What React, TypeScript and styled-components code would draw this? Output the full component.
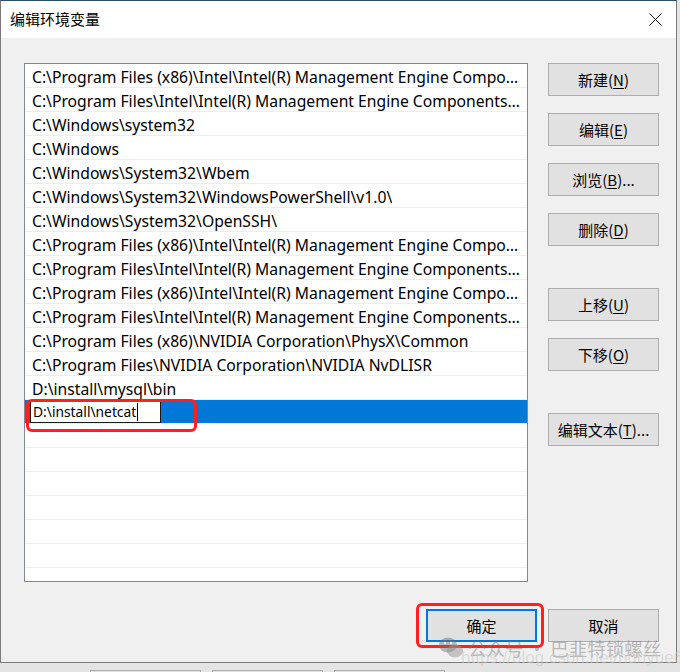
import React from "react";
import styled, { createGlobalStyle } from "styled-components";

const Global = createGlobalStyle`
  html, body { margin: 0; padding: 0; background: #e4e4e4; }
  body { width: 680px; height: 672px; overflow: hidden; }
  * { box-sizing: border-box; }
`;

const FONT = `"Noto Sans", "Noto Sans CJK SC", sans-serif`;
const CJK = `"Noto Sans CJK SC", "Noto Sans", sans-serif`;

const Page = styled.div`
  width: 680px;
  height: 672px;
  display: flex;
  flex-direction: column;
  overflow: hidden;
`;

const Window = styled.div`
  width: 677px;
  height: 663px;
  flex: none;
  background: #f0f0f0;
  border: 1px solid #7a7a7a;
  border-top-color: #2b4f66;
  display: flex;
  flex-direction: column;
  position: relative;
  font-family: ${FONT};
  color: #000;
`;

const TitleBar = styled.div`
  height: 37px;
  background: #fff;
  display: flex;
  align-items: center;
  justify-content: space-between;
  padding: 0 14px 0 9px;
  flex: none;
`;

const Title = styled.div`
  font-family: ${CJK};
  font-size: 15px;
  line-height: 20px;
  margin-top: -2px;
`;

const Body = styled.div`
  flex: 1;
  display: flex;
  flex-direction: column;
  padding: 25px 17px 20px 23px;
`;

const Main = styled.div`
  display: flex;
  gap: 20px;
`;

const ListBox = styled.div`
  position: relative;
  width: 504px;
  height: 519px;
  background: #fff;
  border: 1px solid #828790;
  overflow: hidden;
`;

const Row = styled.div<{ $selected?: boolean }>`
  height: 24px;
  border-bottom: 1px solid #ededed;
  background: ${(p) => (p.$selected ? "#0078d7" : "#fff")};
  display: flex;
  align-items: center;
  padding: 0 3px 0 7px;
  font-size: 15.7px;
  line-height: 22px;
  white-space: nowrap;
  overflow: hidden;
`;

const RowText = styled.span`
  overflow: hidden;
  text-overflow: ellipsis;
  white-space: nowrap;
  padding-top: 3px;
`;

const EditBox = styled.div`
  margin-left: -2px;
  width: 131px;
  height: 23px;
  background: #fff;
  border: 1px solid #1a1a1a;
  display: flex;
  align-items: center;
  padding-left: 2px;
  padding-top: 1px;
  font-size: 13.8px;
  &::after {
    content: "";
    width: 1px;
    height: 18px;
    background: #000;
    margin-left: 1px;
  }
`;

const Mark = styled.div`
  position: absolute;
  border: 3px solid #ff1f1f;
  border-radius: 6px;
  pointer-events: none;
`;

const Side = styled.div`
  display: flex;
  flex-direction: column;
  gap: 17px;
`;

const Spacer = styled.div<{ $h: number }>`
  height: ${(p) => p.$h}px;
`;

const Button = styled.div<{ $default?: boolean }>`
  width: 111px;
  height: 33px;
  background: #e1e1e1;
  border: ${(p) => (p.$default ? "2px solid #0078d7" : "1px solid #adadad")};
  display: flex;
  align-items: center;
  justify-content: center;
  font-family: ${CJK};
  font-size: 15px;
  padding-bottom: 1px;
  u { text-decoration-thickness: 1px; text-underline-offset: 2px; }
`;

const Footer = styled.div`
  margin-top: 27px;
  display: flex;
  justify-content: flex-end;
  gap: 11px;
`;

const OkWrap = styled.div`
  position: relative;
`;

const Watermark = styled.div`
  position: absolute;
  left: 437px;
  top: 634px;
  display: flex;
  align-items: center;
  gap: 4px;
  font-family: ${CJK};
  font-size: 18.5px;
  color: rgba(110, 110, 110, 0.45);
  white-space: nowrap;
  pointer-events: none;
`;

const WatermarkUrl = styled.div`
  position: absolute;
  left: 460px;
  top: 647px;
  font-family: "Liberation Sans", sans-serif;
  font-size: 17px;
  color: rgba(200, 200, 200, 0.55);
  white-space: nowrap;
  pointer-events: none;
`;

const Backdrop = styled.div`
  flex: 1;
  display: flex;
  gap: 11px;
  padding: 7px 0 0 90px;
`;

const GhostButton = styled.div`
  width: 111px;
  height: 20px;
  border: 1px solid #adadad;
  background: #e1e1e1;
`;

const paths = [
  "C:\\Program Files (x86)\\Intel\\Intel(R) Management Engine Components\\DAL",
  "C:\\Program Files\\Intel\\Intel(R) Management Engine Components\\iCLS",
  "C:\\Windows\\system32",
  "C:\\Windows",
  "C:\\Windows\\System32\\Wbem",
  "C:\\Windows\\System32\\WindowsPowerShell\\v1.0\\",
  "C:\\Windows\\System32\\OpenSSH\\",
  "C:\\Program Files (x86)\\Intel\\Intel(R) Management Engine Components\\DAL",
  "C:\\Program Files\\Intel\\Intel(R) Management Engine Components\\DAL",
  "C:\\Program Files (x86)\\Intel\\Intel(R) Management Engine Components\\IPT",
  "C:\\Program Files\\Intel\\Intel(R) Management Engine Components\\IPT",
  "C:\\Program Files (x86)\\NVIDIA Corporation\\PhysX\\Common",
  "C:\\Program Files\\NVIDIA Corporation\\NVIDIA NvDLISR",
  "D:\\install\\mysql\\bin",
];

const WeChatIcon = () => (
  <svg width="26" height="24" viewBox="0 0 26 24" fill="rgba(110,110,110,0.45)">
    <ellipse cx="10" cy="9" rx="9" ry="7.5" />
    <ellipse cx="17" cy="15" rx="8" ry="6.5" fill="rgba(150,150,150,0.5)" />
    <circle cx="7" cy="7" r="1.2" fill="#f0f0f0" />
    <circle cx="13" cy="7" r="1.2" fill="#f0f0f0" />
  </svg>
);

const CloseIcon = () => (
  <svg width="13" height="13" viewBox="0 0 13 13">
    <path d="M0.5 0.5 L12.5 12.5 M12.5 0.5 L0.5 12.5" stroke="#111" strokeWidth="1" fill="none" />
  </svg>
);

export default function App() {
  return (
    <Page>
      <Global />
      <Window>
        <TitleBar>
          <Title>编辑环境变量</Title>
          <CloseIcon />
        </TitleBar>
        <Body>
          <Main>
            <ListBox>
              {paths.map((p, i) => (
                <Row key={i}>
                  <RowText>{p}</RowText>
                </Row>
              ))}
              <Row $selected>
                <EditBox>D:\install\netcat</EditBox>
              </Row>
              {Array.from({ length: 7 }).map((_, i) => (
                <Row key={"e" + i} />
              ))}
              <Mark style={{ left: 1, top: 335, width: 171, height: 33 }} />
            </ListBox>
            <Side>
              <Button>新建(<u>N</u>)</Button>
              <Button>编辑(<u>E</u>)</Button>
              <Button>浏览(<u>B</u>)...</Button>
              <Button>删除(<u>D</u>)</Button>
              <Spacer $h={8} />
              <Button>上移(<u>U</u>)</Button>
              <Button>下移(<u>O</u>)</Button>
              <Spacer $h={8} />
              <Button>编辑文本(<u>T</u>)...</Button>
            </Side>
          </Main>
          <Footer>
            <OkWrap>
              <Button $default>确定</Button>
              <Mark style={{ left: -10, top: -6, width: 128, height: 45 }} />
            </OkWrap>
            <Button>取消</Button>
          </Footer>
        </Body>
        <Watermark>
          <WeChatIcon />
          <span>公众号 · 巴韭特锁螺丝</span>
        </Watermark>
        <WatermarkUrl>https://blog.csdn.net/huhyue6</WatermarkUrl>
      </Window>
      <Backdrop>
        <GhostButton />
        <GhostButton />
        <GhostButton />
      </Backdrop>
    </Page>
  );
}
